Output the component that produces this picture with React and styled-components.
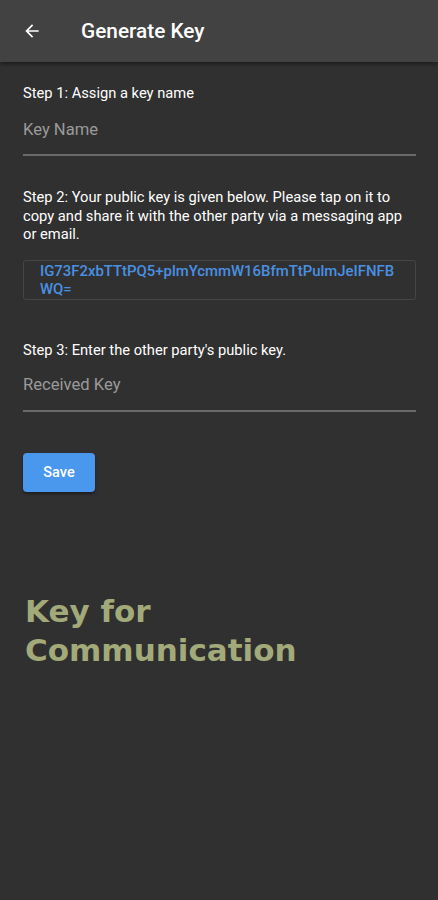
import React from 'react';
import styled, { createGlobalStyle } from 'styled-components';

const GlobalStyle = createGlobalStyle`
  html, body {
    margin: 0;
    padding: 0;
    background: #303030;
  }
  body {
    font-family: Roboto, "Liberation Sans", sans-serif;
  }
`;

const Screen = styled.div`
  width: 438px;
  min-height: 900px;
  background: #303030;
  display: flex;
  flex-direction: column;
`;

const AppBar = styled.header`
  height: 62px;
  background: #424242;
  display: flex;
  align-items: center;
  padding: 0 0 0 21px;
  box-shadow: 0 2px 4px rgba(0, 0, 0, 0.45);
  position: relative;
  z-index: 1;
`;

const BackButton = styled.div`
  width: 22px;
  height: 22px;
  display: flex;
  align-items: center;
  justify-content: center;
  margin-right: 38px;
`;

const Title = styled.h1`
  margin: 0;
  color: #ffffff;
  font-size: 20.8px;
  font-weight: 500;
`;

const Content = styled.main`
  display: flex;
  flex-direction: column;
  padding: 22px 22px 0 23px;
`;

const StepLabel = styled.p`
  margin: 0;
  color: #ffffff;
  font-size: 14.7px;
  line-height: 18.5px;
`;

const Field = styled.div`
  margin-top: ${p => p.$top}px;
  border-bottom: 2px solid #6a6a6a;
  padding-bottom: ${p => p.$bottom}px;
`;

const Placeholder = styled.span`
  display: block;
  color: #9a9a9a;
  font-size: 16.6px;
  line-height: 20px;
`;

const KeyBox = styled.div`
  margin-top: 16.5px;
  border: 1px solid #454545;
  border-radius: 3px;
  padding: 1px 16px;
  color: #4a90e2;
  font-size: 14.9px;
  font-weight: 500;
  line-height: 18px;
  word-break: break-all;
`;

const SaveButton = styled.button`
  margin-top: 41px;
  width: 72px;
  height: 39px;
  border: none;
  border-radius: 4px;
  background: #4a98ee;
  color: #ffffff;
  font-family: Roboto, "Liberation Sans", sans-serif;
  font-size: 14.5px;
  font-weight: 500;
  box-shadow: 0 2px 3px rgba(0, 0, 0, 0.4);
`;

const Slogan = styled.div`
  margin-top: 100px;
  margin-left: 2px;
  color: #a3aa7a;
  font-family: "DejaVu Sans", "Liberation Sans", sans-serif;
  font-size: 31px;
  font-weight: 700;
  line-height: 39px;
`;

const Spacer = styled.div`
  height: ${p => p.$h}px;
`;

export default function App() {
  return (
    <Screen>
      <GlobalStyle />
      <AppBar>
        <BackButton>
          <svg width="20" height="20" viewBox="0 0 24 24">
            <path d="M20 11H7.83l5.59-5.59L12 4l-8 8 8 8 1.41-1.41L7.83 13H20v-2z" fill="#ffffff" />
          </svg>
        </BackButton>
        <Title>Generate Key</Title>
      </AppBar>
      <Content>
        <StepLabel>Step 1: Assign a key name</StepLabel>
        <Field $top={17.5} $bottom={14}>
          <Placeholder>Key Name</Placeholder>
        </Field>
        <Spacer $h={32} />
        <StepLabel>
          Step 2: Your public key is given below. Please tap on it to copy and share it with the other party via a messaging app or email.
        </StepLabel>
        <KeyBox>IG73F2xbTTtPQ5+plmYcmmW16BfmTtPulmJeIFNFBWQ=</KeyBox>
        <Spacer $h={41} />
        <StepLabel>Step 3: Enter the other party's public key.</StepLabel>
        <Field $top={15.5} $bottom={15}>
          <Placeholder>Received Key</Placeholder>
        </Field>
        <SaveButton>Save</SaveButton>
        <Slogan>
          Key for
          <br />
          Communication
        </Slogan>
      </Content>
    </Screen>
  );
}
